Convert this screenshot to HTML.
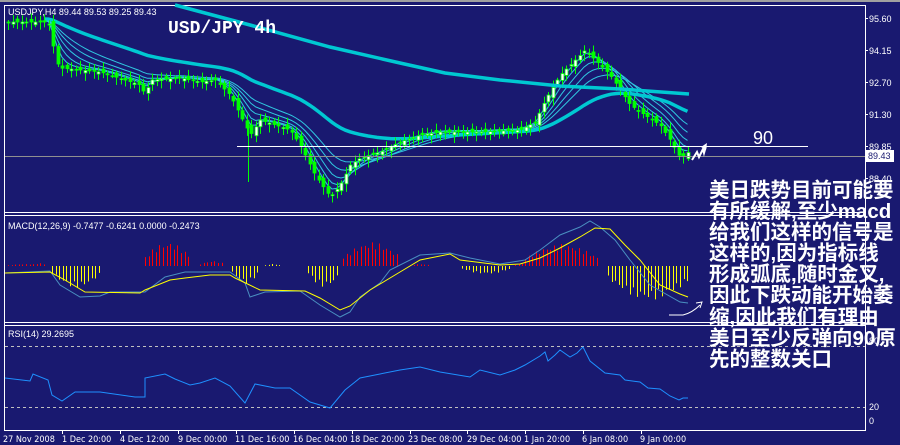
<!DOCTYPE html>
<html><head><meta charset="utf-8"><style>
html,body{margin:0;padding:0;background:#191970;width:900px;height:445px;overflow:hidden}
svg{position:absolute;left:0;top:0}
.t{font-family:"Liberation Sans",sans-serif;font-size:9px;fill:#fff}
.ax{font-family:"DejaVu Sans Condensed","Liberation Sans Narrow","Liberation Sans",sans-serif;font-size:9px;fill:#fff}
#cn{position:absolute;left:709px;top:180px;font-family:"Liberation Sans","Noto Sans CJK SC",sans-serif;font-size:20.5px;line-height:21.1px;font-weight:bold;color:#fff;white-space:nowrap;letter-spacing:0px}
</style></head><body>
<svg id="s" width="900" height="445" xmlns="http://www.w3.org/2000/svg">
<rect x="0" y="0" width="900" height="445" fill="#191970"/>
<rect x="0" y="0" width="900" height="2" fill="#a0a0a0"/>
<g stroke="#fff" stroke-width="1" fill="none">
<line x1="4.5" y1="5" x2="4.5" y2="431"/>
<line x1="4" y1="5.5" x2="865" y2="5.5"/>
<line x1="865.5" y1="5" x2="865.5" y2="431"/>
<line x1="4" y1="212.5" x2="865" y2="212.5"/>
<line x1="4" y1="215.5" x2="865" y2="215.5"/>
<line x1="4" y1="322.5" x2="865" y2="322.5"/>
<line x1="4" y1="325.5" x2="865" y2="325.5"/>
<line x1="4" y1="430.5" x2="866" y2="430.5"/>
</g>
<g id="g"></g>
<line x1="5" y1="156.5" x2="865" y2="156.5" stroke="#909090"/>
<line x1="237" y1="146.5" x2="808" y2="146.5" stroke="#fff"/>
<text x="753" y="144" font-family="Liberation Sans,sans-serif" font-size="18" fill="#fff">90</text>
<polyline points="692,160 697,152 699,157 703,149 704,153 706,146" fill="none" stroke="#fff" stroke-width="2"/>
<polygon points="707,143 701,147 706,150" fill="#fff"/>
<path d="M669,315 L683,315 Q692,313 700,305" fill="none" stroke="#fff" stroke-width="1"/>
<polyline points="696,303 702,302 700,308" fill="none" stroke="#fff"/>
<line x1="5" y1="346.5" x2="865" y2="346.5" stroke="#c0c0c0" stroke-dasharray="3,3"/>
<line x1="5" y1="407.5" x2="865" y2="407.5" stroke="#c0c0c0" stroke-dasharray="3,3"/>
<polyline fill="none" stroke="#1e90ff" stroke-width="1" points="5,378 30,381 33,374 48,380 52,395 62,401 75,392 100,392 135,397 145,397 145,378 165,374 175,379 190,385 200,383 215,378 230,386 245,403 255,384 275,388 290,388 310,402 330,408 345,390 360,378 380,374 400,370 420,367 440,372 470,377 480,370 500,375 515,370 525,365 540,356 545,352 548,361 555,355 560,350 570,357 577,353 583,347 590,361 605,373 620,375 625,380 640,382 648,388 660,389 670,396 679,400 683,398 688,398"/>
<polyline fill="none" stroke="#4a8fc0" stroke-width="1" points="5,273 50,271 60,285 80,297 100,296 110,292 145,292 165,277 185,272 230,272 245,283 250,297 265,292 300,291 320,305 340,317 350,312 360,297 380,283 390,270 420,255 450,253 470,258 500,264 525,260 540,250 560,235 580,227 590,221 600,227 615,240 630,260 650,285 680,302 688,303"/>
<polyline fill="none" stroke="#ffff00" stroke-width="1" points="5,273 50,272 65,280 85,292 140,293 145,290 170,280 185,278 210,275 230,275 235,278 260,290 305,291 320,298 340,310 350,306 370,290 400,272 420,260 450,254 460,260 500,265 520,264 540,258 560,248 580,237 595,228 610,229 625,245 640,260 660,285 680,294 688,297"/>
<polyline fill="none" stroke="#00c8d2" stroke-width="3.5" points="175,5 250,25 330,47 400,63 445,73 500,80 560,86 620,89 689,94"/>
<text class="t" x="8" y="15">USDJPY,H4  89.44 89.53 89.25 89.43</text>
<text x="168" y="33" font-family="Liberation Mono,monospace" font-weight="bold" font-size="18" fill="#fff">USD/JPY 4h</text>
<text class="t" x="8" y="229">MACD(12,26,9) -0.7477 -0.6241 0.0000 -0.2473</text>
<text class="t" x="8" y="337">RSI(14) 29.2695</text>
<g class="t">
<text x="869" y="22">95.60</text><text x="869" y="54">94.15</text><text x="869" y="86">92.70</text>
<text x="869" y="118">91.30</text><text x="869" y="150">89.85</text><text x="869" y="182">88.40</text>
<text x="869" y="344">80</text><text x="869" y="410">20</text><text x="869" y="424">0</text>
</g>
<g stroke="#fff"><line x1="865" y1="18.5" x2="868" y2="18.5"/><line x1="865" y1="50.5" x2="868" y2="50.5"/><line x1="865" y1="82.5" x2="868" y2="82.5"/><line x1="865" y1="114.5" x2="868" y2="114.5"/><line x1="865" y1="146.5" x2="868" y2="146.5"/><line x1="865" y1="178.5" x2="868" y2="178.5"/></g>
<rect x="866" y="150" width="28" height="12" fill="#fff"/>
<text x="868" y="159" font-family="Liberation Sans,sans-serif" font-size="9" fill="#191970">89.43</text>
<g class="ax">
<text x="3" y="442">27 Nov 2008</text><text x="62" y="442">1 Dec 20:00</text><text x="120" y="442">4 Dec 12:00</text>
<text x="178" y="442">9 Dec 00:00</text><text x="235" y="442">11 Dec 16:00</text><text x="293" y="442">16 Dec 04:00</text>
<text x="350" y="442">18 Dec 20:00</text><text x="408" y="442">23 Dec 08:00</text><text x="467" y="442">29 Dec 04:00</text>
<text x="524" y="442">1 Jan 20:00</text><text x="582" y="442">6 Jan 08:00</text><text x="640" y="442">9 Jan 00:00</text>
</g>
<g stroke="#fff"><line x1="62.5" y1="430" x2="62.5" y2="434"/><line x1="120.5" y1="430" x2="120.5" y2="434"/><line x1="178.5" y1="430" x2="178.5" y2="434"/><line x1="236.5" y1="430" x2="236.5" y2="434"/><line x1="294.5" y1="430" x2="294.5" y2="434"/><line x1="352.5" y1="430" x2="352.5" y2="434"/><line x1="410.5" y1="430" x2="410.5" y2="434"/><line x1="467.5" y1="430" x2="467.5" y2="434"/><line x1="525.5" y1="430" x2="525.5" y2="434"/><line x1="583.5" y1="430" x2="583.5" y2="434"/><line x1="641.5" y1="430" x2="641.5" y2="434"/></g>
</svg>
<div id="cn">美日跌势目前可能要<br>有所缓解,至少macd<br>给我们这样的信号是<br>这样的,因为指标线<br>形成弧底,随时金叉,<br>因此下跌动能开始萎<br>缩,因此我们有理由<br>美日至少反弹向90原<br>先的整数关口</div>
<script>
(function(){
var NS="http://www.w3.org/2000/svg",g=document.getElementById("g");
function el(n,a){var e=document.createElementNS(NS,n);for(var k in a)e.setAttribute(k,a[k]);g.appendChild(e);return e;}
var P=[[8,22],[45,22],[50,25],[55,60],[60,68],[100,72],[140,85],[145,95],[150,80],[180,78],[200,82],[215,80],[230,95],[245,125],[250,135],[260,120],[290,130],[300,145],[315,175],[330,197],[340,185],[350,165],[360,158],[380,152],[400,142],[420,135],[440,132],[480,132],[520,130],[535,122],[545,100],[560,75],[575,60],[585,50],[595,60],[610,75],[620,90],[630,105],[640,112],[660,125],[670,140],[680,158],[688,152]];
function at(x){for(var i=1;i<P.length;i++){if(x<=P[i][0]){var a=P[i-1],b=P[i];return a[1]+(b[1]-a[1])*(x-a[0])/(b[0]-a[0]);}}return P[P.length-1][1];}
var xs=[],cl=[];for(var x=8;x<=688;x+=4.5){xs.push(x);cl.push(at(x));}
function ema(n){var k=2/(n+1),o=[],v;for(var i=0;i<cl.length;i++){v=i?v+(cl[i]-v)*k:cl[0];o.push(v);}return o;}
[3,5,8,12,17].forEach(function(n){var e=ema(n),pts=[];for(var i=8;i<xs.length;i++)pts.push(xs[i]+","+(e[i]-1.5).toFixed(1));el("polyline",{points:pts.join(" "),fill:"none",stroke:"#30c8e0","stroke-width":"1"});});
var e50=ema(40),pts=[];for(var i=8;i<xs.length;i++)pts.push(xs[i]+","+(e50[i]-3).toFixed(1));
el("polyline",{points:pts.join(" "),fill:"none",stroke:"#00c8d2","stroke-width":"3.5"});
for(var i=0;i<xs.length;i++){var c=cl[i],o=(i?cl[i-1]:c)+Math.sin(i*2.3)*3,hi=Math.min(o,c)-2-Math.abs(Math.sin(i*1.7))*5,lo=Math.max(o,c)+2+Math.abs(Math.cos(i*1.3))*6;
var X=Math.round(xs[i]);el("line",{x1:X+.5,y1:hi,x2:X+.5,y2:lo,stroke:"#00ff00"});
var bull=c<o;el("rect",{x:X-1,y:Math.min(o,c),width:3,height:Math.max(1,Math.abs(o-c)),fill:bull?"#fff":"#00ff00",stroke:"#00ff00","stroke-width":"0.8"});}
el("line",{x1:248.5,y1:125,x2:248.5,y2:182,stroke:"#00ff00"});
var H=[[8,45,"r",-2],[33,45,"r",-3],[52,100,"y",22],[145,190,"r",-24],[200,225,"r",-5],[232,258,"y",18],[265,280,"y",-2],[308,340,"y",21],[343,400,"r",-24],[410,430,"r",-2],[462,510,"y",8],[515,524,"r",-3],[525,598,"r",-22],[608,690,"y",34]];
H.forEach(function(h){for(var x=h[0];x<=h[1];x+=3.6){var t=(x-h[0])/(h[1]-h[0]+0.01),v=h[3]*(0.4+0.6*Math.sin(Math.PI*t))*(0.85+0.15*Math.sin(x));
el("line",{x1:Math.round(x)+.5,y1:266,x2:Math.round(x)+.5,y2:266+v,stroke:h[2]=="r"?"#ff0000":"#ffff00"});}});
})();
</script>
</body></html>
